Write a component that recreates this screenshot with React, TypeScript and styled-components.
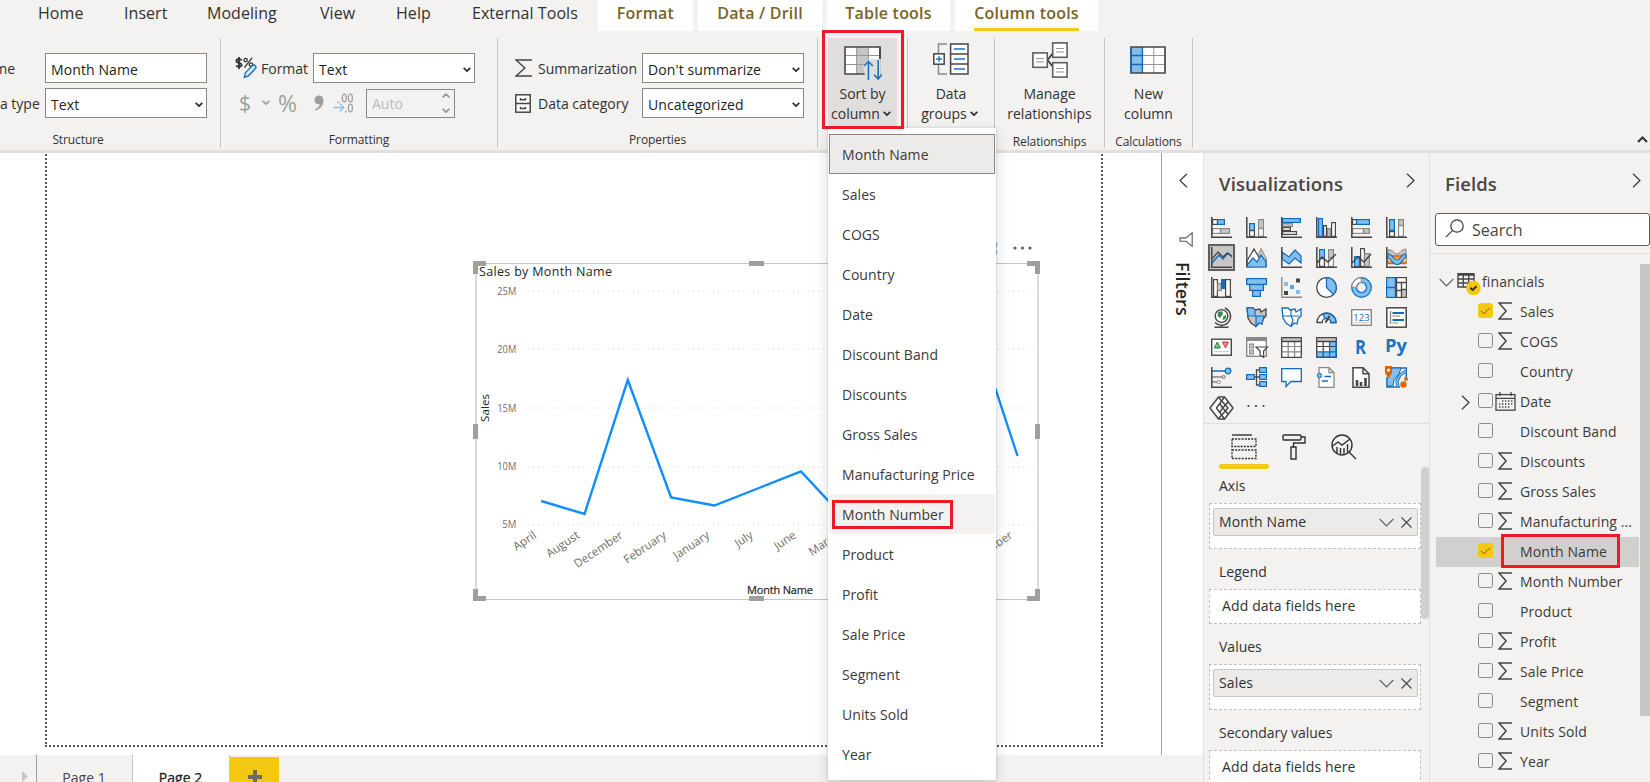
import React from "react";
import styled, { createGlobalStyle } from "styled-components";

const GlobalStyle = createGlobalStyle`
  * { box-sizing: border-box; }
  html, body { margin: 0; padding: 0; overflow: hidden; }
  body {
    font-family: "Open Sans", "Noto Sans", sans-serif;
    color: #323130;
    font-size: 14px;
    background: #f3f2f1;
  }
  svg { display: block; flex: none; }
`;

const D = "#484644";
const B = "#0f6cbd";
const L = "#83beec";
const G = "#c8c6c4";
const M = "#8a8886";

/* ---------- frame ---------- */

const Window = styled.div`
  position: relative;
  width: 1650px;
  height: 782px;
  overflow: hidden;
  display: flex;
  flex-direction: column;
  background: #f3f2f1;
`;

const TabBar = styled.nav`
  display: flex;
  height: 31px;
  flex: none;
`;

const PlainTabs = styled.div`
  display: flex;
  width: 598px;
  padding-left: 38px;
`;

const PlainTab = styled.div<{ $w: number }>`
  width: ${(p) => p.$w}px;
  height: 26px;
  line-height: 26px;
  font-size: 16px;
  letter-spacing: 0.05px;
  white-space: nowrap;
`;

const ContextTab = styled.div<{ $w: number; $active?: boolean }>`
  width: ${(p) => p.$w}px;
  margin-right: 5px;
  height: 31px;
  background: #fff;
  color: #7a6326;
  font-weight: 600;
  font-size: 16px;
  letter-spacing: 0.2px;
  display: flex;
  justify-content: center;
  white-space: nowrap;
  span {
    height: 31px;
    line-height: 26px;
    border-bottom: ${(p) => (p.$active ? "3px solid #f2c811" : "none")};
  }
`;

/* ---------- ribbon ---------- */

const RibbonBar = styled.section`
  display: flex;
  flex: none;
  height: 122px;
  padding-top: 7px;
  border-bottom: 3px solid #e1dfdd;
`;

const Group = styled.div<{ $w: number }>`
  width: ${(p) => p.$w}px;
  height: 110px;
  border-right: 1px solid #c8c6c4;
  display: flex;
  flex-direction: column;
  align-items: stretch;
`;

const GroupBody = styled.div<{ $left?: number }>`
  height: 94px;
  padding: 15px 0 0 ${(p) => p.$left ?? 0}px;
  display: flex;
  flex-direction: column;
  gap: 5px;
`;

const GroupLabel = styled.div<{ $shift?: number }>`
  height: 18px;
  line-height: 19px;
  font-size: 12px;
  text-align: center;
  white-space: nowrap;
  letter-spacing: -0.1px;
  padding-right: ${(p) => p.$shift ?? 0}px;
`;

const FieldRow = styled.div<{ $pull?: number }>`
  display: flex;
  align-items: center;
  height: 30px;
  margin-left: ${(p) => -(p.$pull ?? 0)}px;
`;

const FieldLabel = styled.span<{ $w: number; $gap?: number }>`
  width: ${(p) => p.$w}px;
  padding-left: ${(p) => p.$gap ?? 0}px;
  flex: none;
  white-space: nowrap;
  font-size: 14px;
  height: 30px;
  line-height: 32px;
`;

const Field = styled.div<{ $w: number }>`
  width: ${(p) => p.$w}px;
  height: 30px;
  flex: none;
  border: 1px solid #8a8886;
  background: #fff;
  color: #201f1e;
  padding: 0 3px 0 5px;
  display: flex;
  align-items: center;
  justify-content: space-between;
  white-space: nowrap;
  font-size: 14px;
  letter-spacing: 0.1px;
  > span {
    height: 28px;
    line-height: 31px;
  }
  > svg { margin-top: 3px; }
`;

const DisabledSpin = styled.div`
  width: 89px;
  height: 29px;
  margin-left: 12px;
  border: 1px solid #8a8886;
  color: #b5bcc1;
  display: flex;
  justify-content: space-between;
  align-items: center;
  padding: 0 4px 0 5px;
  font-size: 14px;
`;

const SpinArrows = styled.div`
  display: flex;
  flex-direction: column;
  gap: 9px;
  svg:first-child { transform: rotate(180deg); }
`;

const FormatButtons = styled.div`
  display: flex;
  align-items: center;
  width: 98px;
  height: 30px;
  padding-left: 4px;
`;

const FormatGlyph = styled.span<{ $w: number; $size: number; $gap?: number }>`
  width: ${(p) => p.$w}px;
  margin-left: ${(p) => p.$gap ?? 0}px;
  flex: none;
  font-size: ${(p) => p.$size}px;
  line-height: 30px;
  color: #a19f9d;
`;

const BigButton = styled.div<{ $pressed?: boolean; $w: number }>`
  width: ${(p) => p.$w}px;
  height: 94px;
  margin: 0 auto;
  background: ${(p) => (p.$pressed ? "#e1dfdd" : "transparent")};
  display: flex;
  flex-direction: column;
  align-items: center;
  padding-top: 2px;
  flex: none;
`;

const BigLine = styled.div<{ $menu?: boolean }>`
  display: flex;
  align-items: center;
  gap: 3px;
  height: 20px;
  line-height: 20px;
  font-size: 14px;
  white-space: nowrap;
  margin-left: ${(p) => (p.$menu ? -3 : 0)}px;
`;

const BigIcon = styled.div<{ $top?: number; $bottom?: number }>`
  height: 44px;
  display: flex;
  align-items: center;
  padding-top: ${(p) => p.$top ?? 0}px;
  padding-bottom: ${(p) => p.$bottom ?? 0}px;
`;

const CollapseRibbon = styled.div`
  margin-left: auto;
  padding: 98px 2px 0 0;
`;

/* ---------- body ---------- */

const Body = styled.main`
  display: flex;
  height: 629px;
`;

const Workspace = styled.div`
  width: 1203px;
  display: flex;
  flex-direction: column;
`;

const WorkspaceTop = styled.div`
  display: flex;
  height: 602px;
  background: #fff;
`;

const Stage = styled.div`
  width: 1161px;
  padding-left: 45px;
`;

const dots = "#5a5856";
const Canvas = styled.div`
  position: relative;
  width: 1058px;
  height: 594px;
  background:
    repeating-linear-gradient(to bottom, ${dots} 0 2px, transparent 2px 4px) 0 1px / 2px 100% no-repeat,
    repeating-linear-gradient(to bottom, ${dots} 0 2px, transparent 2px 4px) 100% 1px / 2px 100% no-repeat,
    repeating-linear-gradient(to right, ${dots} 0 2px, transparent 2px 4px) 0 100% / 100% 2px no-repeat;
`;

const Visual = styled.div`
  position: absolute;
  left: 425px;
  top: 85px;
`;

const FiltersStrip = styled.aside`
  width: 42px;
  border-left: 1px solid #a19f9d;
  display: flex;
  flex-direction: column;
  align-items: flex-start;
  gap: 44px;
  padding: 20px 0 0 17px;
`;

const FiltersHead = styled.div`
  display: flex;
  flex-direction: column;
  gap: 15px;
`;

const FiltersTitle = styled.div`
  writing-mode: vertical-rl;
  font-weight: 600;
  font-size: 18px;
  line-height: 20px;
  letter-spacing: 0;
  color: #252423;
  width: 20px;
  margin-left: -6px;
`;

const PageBar = styled.div`
  display: flex;
  height: 27px;
  background: #f3f2f1;
`;

const PageNav = styled.div`
  width: 37px;
  border-right: 1px solid #a19f9d;
  padding: 16px 0 0 22px;
`;

const PageTab = styled.div<{ $active?: boolean }>`
  width: ${(p) => (p.$active ? 97 : 96)}px;
  border-right: 1px solid #c8c6c4;
  background: ${(p) => (p.$active ? "#fff" : "transparent")};
  color: ${(p) => (p.$active ? "#201f1e" : "#484644")};
  -webkit-text-stroke: ${(p) => (p.$active ? "0.3px #201f1e" : "0")};
  text-align: center;
  padding-right: 1px;
  line-height: 45px;
  height: 27px;
  overflow: hidden;
  font-size: 14px;
`;

const AddPage = styled.div`
  width: 49px;
  margin-top: 2px;
  background: #f2c811;
  padding: 13px 0 0 18px;
  overflow: hidden;
`;

/* ---------- side panes ---------- */

const VizPane = styled.aside`
  width: 226px;
  border-left: 1px solid #e1dfdd;
  display: flex;
  flex-direction: column;
`;

const PaneHeader = styled.header<{ $right: number }>`
  display: flex;
  justify-content: space-between;
  height: 60px;
  padding: 20px ${(p) => p.$right}px 0 15px;
`;

const PaneTitle = styled.h2`
  margin: 0;
  font-size: 18.5px;
  font-weight: 600;
  line-height: 22px;
  letter-spacing: 0.1px;
  color: #484644;
`;

const VizGrid = styled.div`
  display: grid;
  grid-template-columns: repeat(6, 35px);
  grid-auto-rows: 30px;
  height: 210px;
  padding-top: 1px;
`;

const VizCell = styled.div<{ $on?: boolean }>`
  width: 27px;
  height: 27px;
  margin-left: 4px;
  padding: ${(p) => (p.$on ? "1px" : "3px")};
  background: ${(p) => (p.$on ? "#c8c6c4" : "transparent")};
  border: ${(p) => (p.$on ? "2px solid #605e5c" : "none")};
`;

const WellTabs = styled.div`
  display: flex;
  height: 47px;
  border-top: 1px solid #e1dfdd;
  padding: 10px 0 0 15px;
`;

const WellTab = styled.div<{ $active?: boolean }>`
  width: 50px;
  height: 36px;
  display: flex;
  flex-direction: column;
  align-items: center;
  &::after {
    content: "";
    width: 50px;
    height: 5px;
    margin-top: 4px;
    border-radius: 3px;
    background: ${(p) => (p.$active ? "#f2c811" : "transparent")};
  }
`;

const WellArea = styled.div`
  display: flex;
  height: 312px;
`;

const Wells = styled.div`
  width: 217px;
  padding-left: 5px;
`;

const WellLabel = styled.div<{ $h: number; $line: number }>`
  height: ${(p) => p.$h}px;
  line-height: ${(p) => p.$line}px;
  padding-left: 10px;
  font-size: 14px;
`;

const WellBox = styled.div<{ $empty?: boolean }>`
  height: ${(p) => (p.$empty ? 35 : 46)}px;
  border: 1px dashed #c0bebc;
  background: #fff;
  padding: ${(p) => (p.$empty ? "0 0 0 12px" : "4px 2px 0 3px")};
  line-height: 31px;
  font-size: 14px;
  letter-spacing: 0.13px;
`;

const Chip = styled.div`
  height: 28px;
  border: 1px solid #c8c6c4;
  border-radius: 2px;
  background: #edebe9;
  display: flex;
  align-items: center;
  gap: 7px;
  padding: 0 5px;
  line-height: 28px;
  span { flex: 1; }
`;

const WellScroll = styled.div`
  width: 8px;
  height: 152px;
  margin-top: -3px;
  border-radius: 4px;
  background: #d2d0ce;
`;

const FieldsPane = styled.aside`
  width: 221px;
  border-left: 1px solid #e1dfdd;
`;

const SearchArea = styled.div`
  height: 41px;
  border-bottom: 1px solid #e1dfdd;
  padding-left: 5px;
`;

const SearchBox = styled.div`
  height: 33px;
  width: 215px;
  border: 1px solid #605e5c;
  border-radius: 3px;
  background: #fff;
  display: flex;
  align-items: center;
  gap: 8px;
  padding: 0 0 2px 9px;
  font-size: 16px;
  color: #484644;
  span { padding-top: 3px; }
`;

const Tree = styled.div`
  display: flex;
  padding-top: 10px;
`;

const TreeRows = styled.div`
  width: 210px;
  padding: 3px 0 0 6px;
  flex: none;
`;

const TreeRow = styled.div<{ $on?: boolean }>`
  display: flex;
  align-items: center;
  height: 30px;
  width: 203px;
  white-space: nowrap;
  background: ${(p) => (p.$on ? "#d2d0ce" : "transparent")};
`;

const Expander = styled.div<{ $w: number; $pl: number }>`
  width: ${(p) => p.$w}px;
  padding-left: ${(p) => p.$pl}px;
  flex: none;
`;

const TableIconSlot = styled.div`
  width: 25px;
  padding: 4px 0 0 0;
`;

const Check = styled.div<{ $on?: boolean }>`
  width: 15px;
  height: 15px;
  flex: none;
  border-radius: 2.5px;
  margin-top: -3px;
  border: 1px solid ${(p) => (p.$on ? "#f2c811" : "#8a8886")};
  background: ${(p) => (p.$on ? "#f2c811" : "transparent")};
`;

const KindIcon = styled.div<{ $pl: number }>`
  width: 27px;
  height: 24px;
  padding: 0 0 2px ${(p) => p.$pl}px;
  display: flex;
  align-items: center;
  flex: none;
`;

const FieldName = styled.span`
  font-size: 14px;
  line-height: 28px;
  letter-spacing: 0.1px;
  color: #3b3a39;
`;

const TreeScroll = styled.div`
  width: 10px;
  height: 452px;
  background: #c8c6c4;
`;

/* ---------- dropdown ---------- */

const Menu = styled.div`
  position: absolute;
  left: 828px;
  top: 128px;
  width: 168px;
  height: 652px;
  background: #fff;
  padding: 6px 1px;
  box-shadow: 0 0 2px rgba(0, 0, 0, 0.2), 0 6px 14px rgba(0, 0, 0, 0.14);
`;

const MenuItem = styled.div<{ $state?: "selected" | "hover" }>`
  height: 40px;
  line-height: ${(p) => (p.$state === "selected" ? 39 : 41)}px;
  padding-left: ${(p) => (p.$state === "selected" ? 12 : 13)}px;
  font-size: 14px;
  letter-spacing: 0.06px;
  color: #3b3a39;
  border: ${(p) => (p.$state === "selected" ? "1px solid #8a8886" : "none")};
  background: ${(p) => (p.$state === "selected" ? "#edebe9" : p.$state === "hover" ? "#f3f2f1" : "#fff")};
`;

const Highlight = styled.div<{ $x: number; $y: number; $w: number; $h: number }>`
  position: absolute;
  left: ${(p) => p.$x}px;
  top: ${(p) => p.$y}px;
  width: ${(p) => p.$w}px;
  height: ${(p) => p.$h}px;
  border: 3px solid #ed1c24;
`;

/* ---------- small icons ---------- */

const Caret = ({ c = "#323130" }: { c?: string }) => (
  <svg width="8" height="5.2" viewBox="0 0 8 5" fill="none" stroke={c} strokeWidth="1.8">
    <path d="M0.7 0.7 L4 4 L7.3 0.7" />
  </svg>
);

const Chevron = ({ dir = "right" }: { dir?: "right" | "left" }) => (
  <svg width="9" height="15" viewBox="0 0 9 15" fill="none" stroke="#3b3a39" strokeWidth="1.2">
    <path d={dir === "right" ? "M1 0.7 L8 7.5 L1 14.3" : "M8 0.7 L1 7.5 L8 14.3"} />
  </svg>
);

const ThinDown = () => (
  <svg width="15" height="9" viewBox="0 0 15 9" fill="none" stroke="#605e5c" strokeWidth="1.1">
    <path d="M0.7 1 L7.5 8 L14.3 1" />
  </svg>
);

const Cross = () => (
  <svg width="11" height="11" viewBox="0 0 11 11" stroke="#484644" strokeWidth="1.1">
    <path d="M0.5 0.5 L10.5 10.5 M10.5 0.5 L0.5 10.5" />
  </svg>
);

const Sigma = ({ w = 14, h = 18 }: { w?: number; h?: number }) => (
  <svg width={w} height={h} viewBox={`0 0 ${w} ${h}`} fill="none" stroke="#484644" strokeWidth="1.5">
    <path d={`M${w} 1 H1 L${w * 0.58} ${h / 2} L1 ${h - 1} H${w}`} />
  </svg>
);

const CalendarIcon = () => (
  <svg width="21" height="19" viewBox="0 0 21 19" fill="none" stroke="#484644" strokeWidth="1.3">
    <rect x="1" y="2.6" width="19" height="15.6" />
    <path d="M1 6.3 H20 M5 0 V4 M16 0 V4" />
    <path d="M7 9 H18 M4 12 H18 M4 15 H15" strokeDasharray="1.4 1.6" />
  </svg>
);

const TableBadge = () => (
  <svg width="24" height="24" viewBox="0 0 24 24" fill="none" stroke="#484644" strokeWidth="1.4">
    <path d="M1 1.7 H17 V15 H1 Z M1 3 H17 M1 7 H17 M1 11 H17 M6.3 3 V15 M11.7 3 V15" />
    <circle cx="16.5" cy="16" r="7.3" fill="#f2c811" stroke="none" />
    <path d="M13.3 15.8 L15.6 18 L19.6 14.2" stroke="#323130" strokeWidth="1.9" />
  </svg>
);

const CheckMark = () => (
  <svg width="13" height="13" viewBox="0 0 13 13" fill="none" stroke="#a8741a" strokeWidth="1.1">
    <path d="M2 6.8 L5 9.6 L11 3.8" />
  </svg>
);

const FormatIcon = () => (
  <svg width="22" height="22" viewBox="0 0 22 22">
    <g fill="none" stroke="#323130" strokeWidth="1.8">
      <path d="M6.6 3.3 C5 1.6 1.4 1.9 1.4 4 C1.4 6.6 6.6 5 6.6 8 C6.6 10 2.8 10.3 1.2 8.6 M4 0 V12" />
      <circle cx="10.6" cy="3.1" r="1.7" strokeWidth="1.3" />
      <circle cx="16" cy="7.6" r="1.7" strokeWidth="1.3" />
      <path d="M17 0.8 L9.4 10.6" strokeWidth="1.3" />
    </g>
    <path d="M9.3 20.4 L10.5 15.6 L17.5 8.6 C19.5 7 22 9.5 20.4 11.6 L13.5 18.8 Z" fill="#d4e8f8" stroke="#1a73bd" strokeWidth="1.4" />
  </svg>
);

const CommaIcon = () => (
  <svg width="10" height="16" viewBox="0 0 10 16" fill="#a19f9d">
    <path d="M5 0.5 C8 0.5 9.6 2.6 9.4 6 C9.2 10.5 6.5 14 1.5 15.5 L1 14.3 C4 13 5.6 11.3 5.8 9 C2.5 10 0.5 7.6 0.5 5 C0.5 2.3 2.5 0.5 5 0.5 Z" />
  </svg>
);

const DecimalIcon = () => (
  <svg width="21" height="20" viewBox="0 0 21 20" fill="none" stroke="#a19f9d" strokeWidth="1.3">
    <ellipse cx="11.3" cy="5" rx="2" ry="3.9" />
    <ellipse cx="17.4" cy="5" rx="2" ry="3.9" />
    <ellipse cx="17.4" cy="15" rx="2" ry="3.9" />
    <path d="M4.5 9.3 h1.6 M12 18.6 h1.6" strokeWidth="1.6" />
    <path d="M0.5 14.5 H10.5 M6.8 10.5 L10.8 14.5 L6.8 18.5" stroke="#8fbfe8" />
  </svg>
);

const CabinetIcon = () => (
  <svg width="16" height="19" viewBox="0 0 16 19" fill="none" stroke="#484644" strokeWidth="1.5">
    <rect x="0.8" y="0.8" width="14.4" height="17.4" fill="#fff" />
    <path d="M0.8 9.5 H15.2 M5.5 4 V5.8 H10.5 V4 M5.5 12.8 V14.6 H10.5 V12.8" />
  </svg>
);

const SortIcon = () => (
  <svg width="38" height="36" viewBox="0 0 38 36" fill="none">
    <rect x="1" y="2" width="35" height="27" fill="#fff" />
    <rect x="13" y="2" width="11" height="27" fill="#c8c6c4" />
    <path d="M1 10.5 H36 M1 19.5 H36 M12.6 2 V29 M24.4 2 V29" stroke="#979593" />
    <path d="M1 2 H36 V29 H1 Z" stroke="#484644" strokeWidth="1.6" />
    <path d="M19 20 L25 14 H36.8 V30.5 H21 Z" fill="#e1dfdd" />
    <path d="M36 2 V14" stroke="#484644" strokeWidth="1.6" />
    <path d="M24.4 35 V16.5 M20 21 L24.4 16.3 L28.8 21 M34.2 15 V34 M30 29.6 L34.2 34 L38 29.6" stroke="#1a73bd" strokeWidth="1.6" />
  </svg>
);

const GroupsIcon = () => (
  <svg width="36" height="32" viewBox="0 0 36 32" fill="none" stroke="#484644" strokeWidth="1.5">
    <path d="M14 1 H5.5 V10 M5.5 21 V31 H14" stroke="#8a8886" />
    <rect x="0.8" y="10.8" width="10.4" height="10.4" fill="#fff" />
    <path d="M17.6 1 H35 V31 H17.6 Z M17.6 11 H35 M17.6 21 H35" fill="#fff" />
    <path d="M3 16 H9 M6 13 V19 M21 6 H32 M21 16 H32 M21 26 H32" stroke="#1a73bd" strokeWidth="1.3" />
  </svg>
);

const RelationsIcon = () => (
  <svg width="36" height="36" viewBox="0 0 36 36" fill="none" stroke="#605e5c" strokeWidth="1.6">
    <path d="M15.5 18 L21 11 M15.5 18 L21 25" stroke="#323130" />
    <rect x="0.9" y="10.9" width="14.4" height="14.4" fill="#fff" />
    <rect x="20.7" y="0.9" width="14.4" height="14.4" fill="#fff" />
    <rect x="20.7" y="20.7" width="14.4" height="14.4" fill="#fff" />
    <path d="M4 16.5 H12 M4 20 H12 M24 6.5 H32 M24 10 H32 M24 26.5 H32 M24 30 H32" stroke="#979593" strokeWidth="1.1" />
  </svg>
);

const NewColumnIcon = () => (
  <svg width="37" height="28" viewBox="0 0 37 28" fill="none">
    <rect x="1" y="1" width="34" height="26" fill="#fff" />
    <rect x="1" y="1" width="11.5" height="26" fill={L} />
    <path d="M12 9.5 H35 M12 18.5 H35 M23.8 1 V27" stroke="#979593" />
    <path d="M1 9.5 H12 M1 18.5 H12 M12.4 1 V27" stroke={B} strokeWidth="1.4" />
    <path d="M1 1 H35 V27 H1 Z" stroke="#484644" strokeWidth="1.7" />
    <path d="M1 1 V27" stroke={B} strokeWidth="1.4" />
  </svg>
);

const SearchIcon = () => (
  <svg width="19" height="19" viewBox="0 0 19 19" fill="none" stroke="#3b3a39" strokeWidth="1.2">
    <circle cx="12" cy="7" r="6.2" />
    <path d="M7.6 11.4 L0.8 18.2" />
  </svg>
);

const FunnelIcon = () => (
  <svg width="14" height="15" viewBox="0 0 14 15" fill="none" stroke="#605e5c" strokeWidth="1.1">
    <path d="M13.2 0.8 V14.2 L7 9.3 H1 V5.9 H7 Z" />
  </svg>
);

/* ---------- visualization icons ---------- */

const Axis = () => <path d="M0.8 0 V20.2 H21" stroke={D} strokeWidth="1.5" fill="none" />;
const Bar = ({ x, y, w, h, f = "#fff", s = D }: { x: number; y: number; w: number; h: number; f?: string; s?: string }) => (
  <rect x={x + 0.6} y={y + 0.6} width={w - 1.2} height={h - 1.2} fill={f} stroke={s} strokeWidth="1.2" />
);
const mapShape = "M1 1 H7 L9 3 L14 2 L15 5 L20 2 V9 L17 12 L16 17 L13 16 L10 19.5 L5 16 L2 11 Z";

const vizIcons: React.ReactNode[] = [
  <><Bar x={1} y={2} w={6} h={6} /><Bar x={6} y={2} w={8} h={6} f={L} s={B} /><Bar x={1} y={11} w={9} h={6} s={M} /><Bar x={9} y={11} w={10} h={6} f={G} s={M} /><Axis /></>,
  <><Bar x={3} y={6} w={6} h={8} f={L} s={B} /><Bar x={3} y={13} w={6} h={7} /><Bar x={12} y={2} w={6} h={10} f={G} s={M} /><Bar x={12} y={11} w={6} h={9} s={M} /><Axis /></>,
  <><Bar x={1} y={1} w={19} h={5} f={L} s={B} /><Bar x={1} y={6} w={11} h={4} f={G} s={M} /><Bar x={1} y={10} w={9} h={4} /><Bar x={1} y={14} w={15} h={4} /><Axis /></>,
  <><Bar x={2} y={1} w={5} h={19} f={L} s={B} /><Bar x={7} y={8} w={4} h={12} /><Bar x={11} y={11} w={4} h={9} f={G} s={M} /><Bar x={15} y={5} w={5} h={15} /><Axis /></>,
  <><Bar x={1} y={2} w={5} h={6} /><Bar x={5} y={2} w={14} h={6} f={L} s={B} /><Bar x={1} y={11} w={12} h={6} s={M} /><Bar x={12} y={11} w={7} h={6} f={G} s={M} /><Axis /></>,
  <><Bar x={3} y={2} w={6} h={12} f={L} s={B} /><Bar x={3} y={14} w={6} h={6} /><Bar x={12} y={2} w={6} h={7} f={G} s={M} /><Bar x={12} y={8} w={6} h={12} s={M} /><Axis /></>,

  <><path d="M1 16 L8 8 L12 12 L17 6 L21 10" fill="none" stroke={B} strokeWidth="1.4" /><path d="M1 12 L7 5 L12 10 L16 6 L21 9" fill="none" stroke={D} strokeWidth="1.3" /><Axis /></>,
  <><path d="M9 16 L15 1.5 L20.5 12 V20 H9 Z" fill={G} stroke={M} /><path d="M1 14 L8 2 L15 14 L8 20 H1 Z" fill="#fff" stroke={D} strokeWidth="1.2" /><path d="M1 20 V18 L7 11 L11 15 L15 8 L20 15 V20 Z" fill={L} stroke={B} strokeWidth="1.2" /><path d="M0.8 0 V20" stroke={D} strokeWidth="1.4" /></>,
  <><path d="M1 5 L8 10 L14 3 L20 9 V16 L14 11 L8 17 L1 12 Z" fill={L} stroke={B} strokeWidth="1.2" /><Axis /></>,
  <><Bar x={3} y={2} w={6} h={10} f={L} s={B} /><Bar x={3} y={11} w={6} h={9} /><Bar x={12} y={2} w={6} h={9} f={G} s={M} /><Bar x={12} y={10} w={6} h={10} s={M} /><path d="M1 16 L6 10 L12 15 L20 7" stroke={D} strokeWidth="1.4" fill="none" /><Axis /></>,
  <><Bar x={3} y={9} w={6} h={11} f={L} s={B} /><Bar x={9} y={1} w={5} h={19} /><Bar x={13} y={6} w={6} h={14} f={G} s={M} /><path d="M1 16 L7 10 L13 15 L20 7" stroke={D} strokeWidth="1.4" fill="none" /><Axis /></>,
  <><path d="M2 3 C7 2 8 7 11 7 C14 7 15 2 20 2 V6 C16 6 15 10 11 10 C7 10 6 7 2 7 Z" fill={G} stroke={M} /><path d="M2 9 H20 V16.5 H2 Z" fill="#f7a13f" stroke="#d8670b" strokeWidth="1.3" /><path d="M2 13 H20" stroke="#fff" strokeWidth="1.4" /><path d="M2 7 C7 7 7 13 11 13 C15 13 15 7 20 7 V10.5 C17 10.5 16 17.5 11 17.5 C6 17.5 5 11 2 11 Z" fill={L} stroke={B} strokeWidth="1.2" /><Axis /></>,

  <><Bar x={2} y={2} w={5} h={18} /><Bar x={6} y={6} w={5} h={8} f={G} s={M} /><Bar x={10} y={2} w={5} h={10} f={B} s={B} /><Bar x={14} y={2} w={6} h={18} /><Axis /></>,
  <><Bar x={0} y={1} w={21} h={7} f={L} s={B} /><Bar x={3} y={7} w={15} h={7} f={L} s={B} /><Bar x={6} y={13} w={9} h={7} f={L} s={B} /></>,
  <><rect x="3" y="5" width="4" height="4" fill={L} /><rect x="9" y="8" width="4" height="4" fill="#5a9fd8" /><rect x="15" y="1.5" width="4" height="4" fill={D} /><rect x="3" y="14" width="4" height="4" fill={D} /><rect x="15" y="13" width="4" height="4" fill={L} /><path d="M0.8 0 V20.2 H21" stroke={M} strokeWidth="1.4" fill="none" /></>,
  <><circle cx="10.5" cy="10.5" r="9.8" fill="#fff" stroke={D} strokeWidth="1.3" /><path d="M10.5 0.7 A9.8 9.8 0 0 1 17.4 17.4 L10.5 10.5 Z" fill={L} stroke={B} strokeWidth="1.3" /></>,
  <><circle cx="10.5" cy="10.5" r="7.4" fill="none" stroke={B} strokeWidth="6" /><circle cx="10.5" cy="10.5" r="7.4" fill="none" stroke={L} strokeWidth="3.6" /><path d="M3.1 10.5 A7.4 7.4 0 0 1 10.5 3.1" fill="none" stroke={M} strokeWidth="6" /><path d="M3.1 9.7 A7.4 7.4 0 0 1 9.7 3.1" fill="none" stroke="#fff" strokeWidth="3.6" /></>,
  <><Bar x={0} y={0} w={10} h={11} f={L} s={B} /><Bar x={0} y={10} w={10} h={11} f={L} s={B} /><Bar x={10} y={0} w={11} h={6} /><Bar x={10} y={5} w={6} h={9} /><Bar x={15} y={5} w={6} h={8} /><Bar x={10} y={13} w={6} h={8} /><Bar x={15} y={12} w={6} h={9} f={G} s={D} /></>,

  <><circle cx="10.5" cy="9" r="6.3" fill="#fff" stroke={D} strokeWidth="1.3" /><path d="M7 5 L11 4 L12 7 L9 11 L6.5 9 Z M12.5 9 L15.5 8 L14.5 12 L11.5 13 Z" fill="#2f8f46" /><path d="M14 1 A9 9 0 1 1 4 15.5 M10.5 17.5 V20 M3.5 20.3 H17.5" fill="none" stroke={D} strokeWidth="1.4" /></>,
  <><path d={mapShape} fill={G} stroke={D} strokeWidth="1.3" /><path d="M1 1 H7 L9 3 V9 H2 Z" fill={L} stroke={B} strokeWidth="1.2" /><path d="M10 9 H18 L16 17 L13 16 L10 19.5 Z" fill={L} stroke={B} strokeWidth="1.2" /></>,
  <><path d={mapShape} fill="#fff" stroke={B} strokeWidth="1.3" /><path d="M2 9 H18 M10 2.5 V9 L12 13 L10 19" fill="none" stroke={B} strokeWidth="1.1" /></>,
  <><path d="M1 15.5 A9.5 9.5 0 0 1 20 15.5 H14.8 A4.3 4.3 0 0 0 6.2 15.5 Z" fill="#fff" stroke={D} strokeWidth="1.3" /><path d="M7 7 A9.5 9.5 0 0 1 20 15.5 H14.8 A4.3 4.3 0 0 0 9 11.6 Z" fill={L} stroke={B} strokeWidth="1.3" /><path d="M9.5 15.5 L13.5 9" stroke={D} strokeWidth="2" /></>,
  <><rect x="0.7" y="2.7" width="19.6" height="15.6" fill="#fff" stroke={M} strokeWidth="1.4" /><text x="10.5" y="13.5" fontSize="9.5" textAnchor="middle" fill={B}>123</text><path d="M3 15.8 H18" stroke={G} /></>,
  <><rect x="0.8" y="0.8" width="19.4" height="19.4" fill="#fff" stroke={D} strokeWidth="1.5" /><path d="M4.5 4 V17" stroke={M} strokeWidth="1.4" /><path d="M6.5 6 H18 M6.5 13 H18" stroke={B} strokeWidth="1.8" /><path d="M6.5 9 H14 M6.5 16 H12" stroke={M} strokeWidth="1.2" /></>,

  <><rect x="0.7" y="2.2" width="19.6" height="16" fill="#fff" stroke={D} strokeWidth="1.4" /><path d="M3.3 11 L6.3 5 L9.3 11 Z" fill="#7fbf8b" stroke="#217a3c" /><path d="M11.5 5 H17.5 L14.5 11 Z" fill="#f08a80" stroke="#d13438" /><path d="M3 14.7 H18" stroke={G} /></>,
  <><rect x="0.7" y="0.7" width="19.6" height="18.6" fill="#fff" stroke={M} strokeWidth="1.4" /><path d="M1 2.5 H20" stroke={M} strokeWidth="3" /><rect x="3.5" y="7" width="4" height="4" fill={G} stroke={M} /><rect x="3.5" y="13" width="4" height="4" fill={G} stroke={M} /><path d="M10 10 H21.5 L17.6 14 V20.3 L14 18 V14 Z" fill="#fff" stroke={D} strokeWidth="1.2" /></>,
  <><rect x="0.7" y="0.7" width="19.6" height="19.6" fill="#fff" /><path d="M1 3 H20" stroke={G} strokeWidth="4" /><path d="M1 9.5 H20 M1 14.8 H20 M7.2 4 V20 M13.6 4 V20" stroke={M} strokeWidth="1.2" /><path d="M0.7 0.7 H20.3 V20.3 H0.7 Z M1 4.5 H20" fill="none" stroke={D} strokeWidth="1.3" /></>,
  <><rect x="0.7" y="0.7" width="19.6" height="19.6" fill="#fff" /><path d="M1 2.5 H20" stroke={G} strokeWidth="3" /><path d="M13.6 4.5 H20 V20 H1 V14.8 H13.6 Z" fill={L} /><path d="M1 9.5 H20 M7.2 4 V20" stroke={D} strokeWidth="1.2" /><path d="M0.7 0.7 H20.3 V20.3 H0.7 Z M1 4.5 H20" fill="none" stroke={D} strokeWidth="1.3" /><path d="M13.6 5 V20 M1 14.8 H20 M1 20.2 H20.2 V5" stroke={B} strokeWidth="1.3" fill="none" /></>,
  <text x="9.5" y="17" fontSize="19" fontWeight="700" textAnchor="middle" fill="#1a73bd" textLength="11" lengthAdjust="spacingAndGlyphs">R</text>,
  <text x="10" y="14.5" fontSize="18" fontWeight="700" textAnchor="middle" fill="#1a73bd" textLength="22" lengthAdjust="spacingAndGlyphs">Py</text>,

  <><path d="M1 4 H15" stroke={B} strokeWidth="1.5" /><path d="M1 10 H11 M1 15 H6" stroke={M} strokeWidth="1.5" /><circle cx="17" cy="4" r="2.8" fill={L} stroke={B} strokeWidth="1.2" /><circle cx="12.5" cy="10" r="1.7" fill={G} stroke={M} /><circle cx="7.7" cy="15" r="1.7" fill="#fff" stroke={M} /><Axis /></>,
  <><path d="M8 10 H13 M13 3 H10.5 V18 H13" fill="none" stroke={D} strokeWidth="1.3" /><Bar x={0} y={7} w={9} h={6} f={L} s={B} /><Bar x={13} y={0} w={8} h={6} f={L} s={B} /><Bar x={13} y={7} w={8} h={6} f={L} s={B} /><Bar x={13} y={14} w={8} h={6} f={L} s={B} /></>,
  <path d="M0.7 1.7 H20.3 V14.5 H10 L5 19.5 V14.5 H0.7 Z" fill="#fff" stroke={B} strokeWidth="1.3" />,
  <><path d="M3 0.7 H13 L18 5.7 V20.3 H3 Z M13 0.7 V5.7 H18" fill="#fff" stroke={M} strokeWidth="1.3" /><circle cx="3.5" cy="8.5" r="2.2" fill={L} stroke={B} /><path d="M8.5 9.5 H15 M6 14 H12" stroke={B} strokeWidth="1.5" /></>,
  <><path d="M2 0.7 H12 L18 6.7 V20.3 H2 Z M12 0.7 V6.7 H18" fill="#fff" stroke={D} strokeWidth="1.5" /><path d="M6 19 V13 M10 19 V15 M14.5 19 V11" stroke={D} strokeWidth="2.6" /></>,
  <><path d="M6 1 H20.3 V11 M14 20 H1 V10" fill="none" stroke={B} strokeWidth="1.4" /><path d="M6 1 H15 L13 7 L8 13 L7 19 H1 V12 Z" fill={L} stroke={B} /><path d="M20 4 L14 8 L11 14 L12 19" fill="none" stroke={B} strokeWidth="3.2" /><path d="M20 4 L14 8 L11 14 L12 19" fill="none" stroke={L} strokeWidth="1.6" /><path d="M2.5 11.5 L-1 6 V-1 H6 V6 Z" fill="#d8670b" /><circle cx="2.5" cy="3" r="1.6" fill="#fff" /><circle cx="17.5" cy="17.5" r="3.2" fill="#d8670b" /><circle cx="20" cy="12" r="2" fill="#d8670b" /></>,

  <g fill="none" stroke={D} strokeWidth="1.5" strokeLinejoin="round">
    <path d="M-1 11 L7.5 0 H13.5 L22 11 L13.5 22 H7.5 Z" fill="#fff" />
    <path d="M13.5 0 L5.5 11 L13.5 22" />
    <path d="M7.5 0.5 L17 11 L7.5 21.5" />
    <path d="M8.5 6.5 L11.8 11 L8.5 15.5 M17 5 L11.8 11 L17 17" />
  </g>,
  <g fill={D}><circle cx="2.5" cy="9" r="1.1" /><circle cx="10" cy="9" r="1.1" /><circle cx="17.5" cy="9" r="1.1" /></g>,
];

/* ---------- chart ---------- */

const months = ["April", "August", "December", "February", "January", "July", "June", "March", "May", "November", "October", "September"];
const lineY = [263, 276, 142, 259.5, 267.5, 250.5, 233.5, 280, 285, 264, 86, 218];
const px = (i: number) => 71.2 + i * 43.3;
const yTicks: [string, number][] = [["25M", 53.5], ["20M", 111.5], ["15M", 170], ["10M", 228.5], ["5M", 286.5]];

const LineChart = () => (
  <svg width="580" height="370" viewBox="0 0 580 370">
    <path d="M6 25.5 H568 M6 361.5 H568" stroke="#c8c6c4" />
    <path d="M6 25 V362 M568 25 V362" stroke="#dddbd9" strokeWidth="2" />
    {yTicks.map(([label, y]) => (
      <g key={label}>
        <path d={`M53 ${y} H565`} stroke="#d8d6d4" strokeDasharray="1 4" />
        <text x="46.3" y={y + 3.6} textAnchor="end" fontSize="10" fill="#6f6d6b" textLength={label.length > 2 ? 19 : 14} lengthAdjust="spacingAndGlyphs">{label}</text>
      </g>
    ))}
    <polyline points={lineY.map((y, i) => `${px(i)},${y}`).join(" ")} fill="none" stroke="#118dff" strokeWidth="2.4" />
    {months.map((m, i) => (
      <text key={m} transform={`translate(${px(i) - 4},${299}) rotate(-34)`} textAnchor="end" fontSize="11.6" fill="#6f6d6b">{m}</text>
    ))}
    <text x="9" y="38" fontSize="12.5" fill="#252423" textLength="133">Sales by Month Name</text>
    <text x="277" y="356" fontSize="11" fill="#252423" stroke="#252423" strokeWidth="0.2" textLength="66">Month Name</text>
    <text transform="translate(19,184) rotate(-90)" fontSize="11.5" fill="#252423" textLength="28">Sales</text>
    <g fill="#a19f9d">
      <path d="M3 23 H16 V28 H8 V36 H3 Z M570 23 H557 V28 H565 V36 H570 Z M3 363 H16 V358 H8 V351 H3 Z M570 363 H557 V358 H565 V351 H570 Z" />
      <path d="M279 23 H294 V28 H279 Z M279 358 H294 V363 H279 Z M3 186 H8 V201 H3 Z M565 186 H570 V201 H565 Z" />
    </g>
    <g fill="#605e5c"><circle cx="545" cy="10" r="1.6" /><circle cx="552.5" cy="10" r="1.6" /><circle cx="560" cy="10" r="1.6" /></g>
    <path d="M526.5 4 V9.5 M526.5 12 V17" stroke="#8fbfe8" strokeWidth="1.4" />
  </svg>
);

/* ---------- data ---------- */

const menuItems = ["Month Name", "Sales", "COGS", "Country", "Date", "Discount Band", "Discounts", "Gross Sales", "Manufacturing Price", "Month Number", "Product", "Profit", "Sale Price", "Segment", "Units Sold", "Year"];

type FieldDef = { name: string; kind?: "sum" | "date"; on?: boolean; selected?: boolean };
const fields: FieldDef[] = [
  { name: "Sales", kind: "sum", on: true },
  { name: "COGS", kind: "sum" },
  { name: "Country" },
  { name: "Date", kind: "date" },
  { name: "Discount Band" },
  { name: "Discounts", kind: "sum" },
  { name: "Gross Sales", kind: "sum" },
  { name: "Manufacturing ...", kind: "sum" },
  { name: "Month Name", on: true, selected: true },
  { name: "Month Number", kind: "sum" },
  { name: "Product" },
  { name: "Profit", kind: "sum" },
  { name: "Sale Price", kind: "sum" },
  { name: "Segment" },
  { name: "Units Sold", kind: "sum" },
  { name: "Year", kind: "sum" },
];

const plainTabs: [string, number][] = [["Home", 86], ["Insert", 83], ["Modeling", 113], ["View", 76], ["Help", 76], ["External Tools", 110]];

const FieldChip = ({ name }: { name: string }) => (
  <Chip>
    <span>{name}</span>
    <ThinDown />
    <Cross />
  </Chip>
);

const Select = ({ value }: { value: string }) => (
  <Field $w={162}><span>{value}</span><Caret /></Field>
);

export default function App() {
  return (
    <Window>
      <GlobalStyle />
      <TabBar>
        <PlainTabs>
          {plainTabs.map(([t, w]) => <PlainTab key={t} $w={w}>{t}</PlainTab>)}
        </PlainTabs>
        <ContextTab $w={95}><span>Format</span></ContextTab>
        <ContextTab $w={124}><span>Data / Drill</span></ContextTab>
        <ContextTab $w={123}><span>Table tools</span></ContextTab>
        <ContextTab $w={143} $active><span>Column tools</span></ContextTab>
      </TabBar>

      <RibbonBar>
        <Group $w={221}>
          <GroupBody>
            <FieldRow $pull={24}>
              <FieldLabel $w={69}>Name</FieldLabel>
              <Field $w={162}><span>Month Name</span></Field>
            </FieldRow>
            <FieldRow $pull={23}>
              <FieldLabel $w={68}>Data type</FieldLabel>
              <Select value="Text" />
            </FieldRow>
          </GroupBody>
          <GroupLabel $shift={64}>Structure</GroupLabel>
        </Group>

        <Group $w={277}>
          <GroupBody $left={14}>
            <FieldRow>
              <FormatIcon />
              <FieldLabel $w={56} $gap={4}>Format</FieldLabel>
              <Select value="Text" />
            </FieldRow>
            <FieldRow>
              <FormatButtons>
                <FormatGlyph $w={23} $size={21}>$</FormatGlyph>
                <Caret c="#a19f9d" />
                <FormatGlyph $w={36} $size={23} $gap={8}>%</FormatGlyph>
                <CommaIcon />
              </FormatButtons>
              <DecimalIcon />
              <DisabledSpin>
                Auto
                <SpinArrows><Caret c="#979593" /><Caret c="#979593" /></SpinArrows>
              </DisabledSpin>
            </FieldRow>
          </GroupBody>
          <GroupLabel>Formatting</GroupLabel>
        </Group>

        <Group $w={320}>
          <GroupBody $left={17}>
            <FieldRow>
              <Sigma w={17} h={18} />
              <FieldLabel $w={110} $gap={6}>Summarization</FieldLabel>
              <Select value="Don't summarize" />
            </FieldRow>
            <FieldRow>
              <CabinetIcon />
              <FieldLabel $w={111} $gap={7}>Data category</FieldLabel>
              <Select value="Uncategorized" />
            </FieldRow>
          </GroupBody>
          <GroupLabel>Properties</GroupLabel>
        </Group>

        <Group $w={90}>
          <BigButton $w={69} $pressed>
            <BigIcon $top={2}><SortIcon /></BigIcon>
            <BigLine>Sort by</BigLine>
            <BigLine $menu>column<Caret /></BigLine>
          </BigButton>
        </Group>
        <Group $w={87}>
          <BigButton $w={69}>
            <BigIcon $bottom={6}><GroupsIcon /></BigIcon>
            <BigLine>Data</BigLine>
            <BigLine $menu>groups<Caret /></BigLine>
          </BigButton>
        </Group>
        <Group $w={110}>
          <BigButton $w={100}>
            <BigIcon $bottom={4}><RelationsIcon /></BigIcon>
            <BigLine>Manage</BigLine>
            <BigLine>relationships</BigLine>
          </BigButton>
          <GroupLabel>Relationships</GroupLabel>
        </Group>
        <Group $w={88}>
          <BigButton $w={69}>
            <BigIcon $bottom={4}><NewColumnIcon /></BigIcon>
            <BigLine>New</BigLine>
            <BigLine>column</BigLine>
          </BigButton>
          <GroupLabel>Calculations</GroupLabel>
        </Group>
        <CollapseRibbon>
          <svg width="11" height="7" viewBox="0 0 11 7" fill="none" stroke="#323130" strokeWidth="2"><path d="M1 6 L5.5 1.5 L10 6" /></svg>
        </CollapseRibbon>
      </RibbonBar>

      <Body>
        <Workspace>
          <WorkspaceTop>
            <Stage>
              <Canvas><Visual><LineChart /></Visual></Canvas>
            </Stage>
            <FiltersStrip>
              <Chevron dir="left" />
              <FiltersHead>
                <FunnelIcon />
                <FiltersTitle>Filters</FiltersTitle>
              </FiltersHead>
            </FiltersStrip>
          </WorkspaceTop>
          <PageBar>
            <PageNav><svg width="6" height="11" viewBox="0 0 6 11"><path d="M0 0 L6 5.5 L0 11 Z" fill="#c8c6c4" /></svg></PageNav>
            <PageTab>Page 1</PageTab>
            <PageTab $active>Page 2</PageTab>
            <AddPage><svg width="14" height="14" viewBox="0 0 14 14"><path d="M7 0 V14 M0 7 H14" stroke="#6e6a60" strokeWidth="4" /></svg></AddPage>
          </PageBar>
        </Workspace>

        <VizPane>
          <PaneHeader $right={14}><PaneTitle>Visualizations</PaneTitle><Chevron /></PaneHeader>
          <VizGrid>
            {vizIcons.map((icon, i) => (
              <VizCell key={i} $on={i === 6}>
                <svg width="21" height="21" viewBox="0 0 21 21" overflow="visible">{icon}</svg>
              </VizCell>
            ))}
          </VizGrid>
          <WellTabs>
            <WellTab $active>
              <svg width="26" height="26" viewBox="0 0 26 26" fill="none" stroke="#323130" strokeWidth="1.4">
                <path d="M1 1 H21" /><path d="M1 5 H25 V12.5 H1 Z M1 16 H25 V24.5 H1 Z" strokeDasharray="2 1.2" />
              </svg>
            </WellTab>
            <WellTab>
              <svg width="24" height="26" viewBox="0 0 24 26" fill="none" stroke="#323130" strokeWidth="1.4">
                <rect x="1" y="1" width="18" height="5" rx="1" /><path d="M19 3 H23 V9 H11.5 V13 M9 13 H14 V25 H9 Z" />
              </svg>
            </WellTab>
            <WellTab>
              <svg width="26" height="26" viewBox="0 0 26 26" fill="none" stroke="#323130" strokeWidth="1.4">
                <circle cx="11" cy="11" r="10" /><path d="M18 18 L25 25 M1.5 12 L7 8 L11 11 L19 5 M6 19 V13 M9.5 20.5 V14 M13 20.5 V14 M16.5 18.5 V10" />
              </svg>
            </WellTab>
          </WellTabs>
          <WellArea>
            <Wells>
              <WellLabel $h={33} $line={31}>Axis</WellLabel>
              <WellBox><FieldChip name="Month Name" /></WellBox>
              <WellLabel $h={40} $line={45}>Legend</WellLabel>
              <WellBox $empty>Add data fields here</WellBox>
              <WellLabel $h={40} $line={45}>Values</WellLabel>
              <WellBox><FieldChip name="Sales" /></WellBox>
              <WellLabel $h={40} $line={45}>Secondary values</WellLabel>
              <WellBox $empty>Add data fields here</WellBox>
            </Wells>
            <WellScroll />
          </WellArea>
        </VizPane>

        <FieldsPane>
          <PaneHeader $right={9}><PaneTitle>Fields</PaneTitle><Chevron /></PaneHeader>
          <SearchArea><SearchBox><SearchIcon /><span>Search</span></SearchBox></SearchArea>
          <Tree>
            <TreeRows>
              <TreeRow>
                <Expander $w={21} $pl={3}><ThinDown /></Expander>
                <TableIconSlot><TableBadge /></TableIconSlot>
                <FieldName>financials</FieldName>
              </TreeRow>
              {fields.map((f) => (
                <TreeRow key={f.name} $on={f.selected}>
                  <Expander $w={42} $pl={25}>{f.kind === "date" && <Chevron />}</Expander>
                  <Check $on={f.on}>{f.on && <CheckMark />}</Check>
                  <KindIcon $pl={f.kind === "date" ? 2 : 5}>
                    {f.kind === "sum" && <Sigma />}
                    {f.kind === "date" && <CalendarIcon />}
                  </KindIcon>
                  <FieldName>{f.name}</FieldName>
                </TreeRow>
              ))}
            </TreeRows>
            <TreeScroll />
          </Tree>
        </FieldsPane>
      </Body>

      <Menu>
        {menuItems.map((m, i) => (
          <MenuItem key={m} $state={i === 0 ? "selected" : i === 9 ? "hover" : undefined}>{m}</MenuItem>
        ))}
      </Menu>
      <Highlight $x={822} $y={30} $w={82} $h={99} />
      <Highlight $x={832} $y={500} $w={121} $h={29} />
      <Highlight $x={1501} $y={534} $w={119} $h={34} />
    </Window>
  );
}
